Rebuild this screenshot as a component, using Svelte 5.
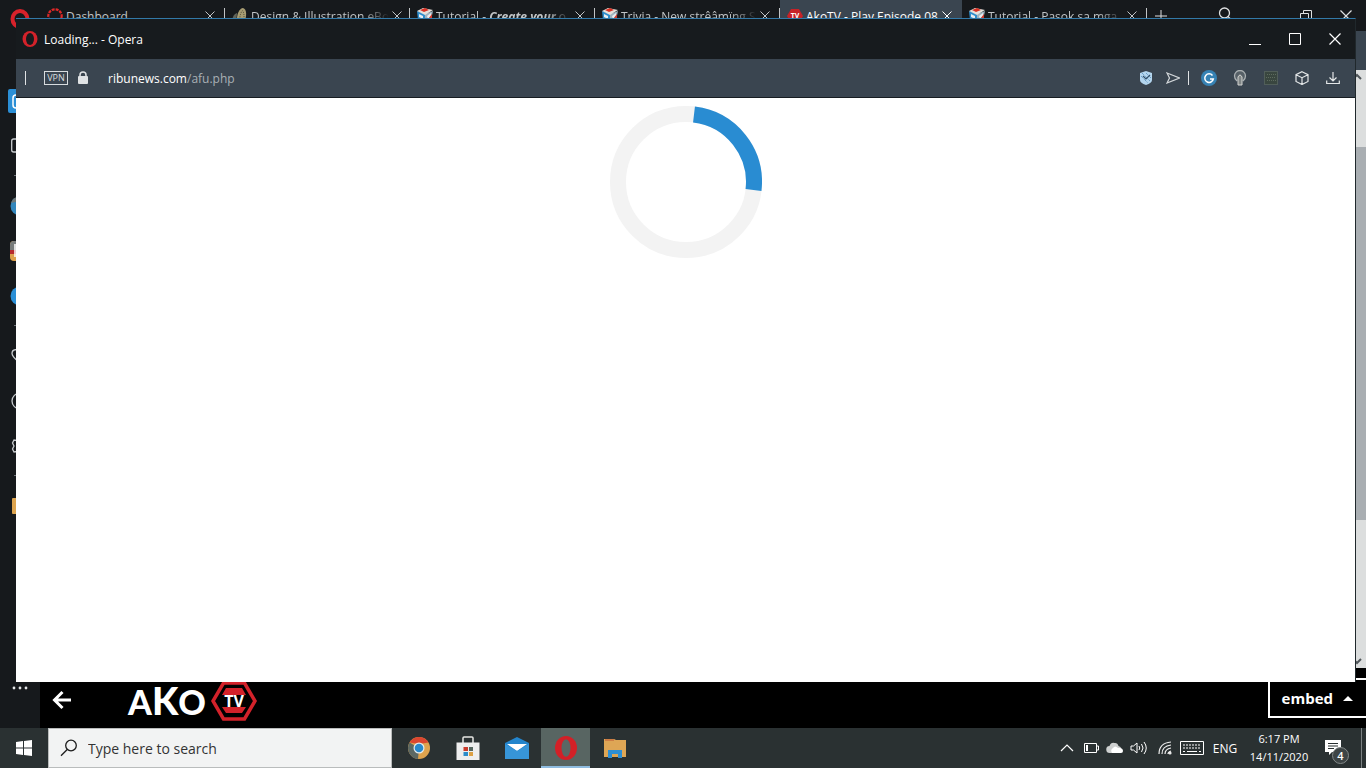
<script lang="ts">
  type Tab = {
    icon: 'gauge' | 'leaf' | 'cube' | 'tv';
    title: string;
    strong?: string;
    rest?: string;
    active?: boolean;
  };

  const tabs: Tab[] = [
    { icon: 'gauge', title: 'Dashboard' },
    { icon: 'leaf', title: 'Design & Illustration eBo' },
    { icon: 'cube', title: 'Tutorial - ', strong: 'Create your', rest: ' o' },
    { icon: 'cube', title: 'Trivia - New strêâmïng S' },
    { icon: 'tv', title: 'AkoTV - Play Episode 08', active: true },
    { icon: 'cube', title: 'Tutorial - Pasok sa mga' }
  ];

  let query = $state('');
</script>

<div class="desktop">
  <div class="browser">
    <aside class="sidebar">
      <button class="side-item tile" aria-label="Speed dial">
        <svg width="24" height="24" viewBox="0 0 24 24"><rect width="24" height="24" rx="2" fill="#2b8fd6" /><rect x="5" y="6" width="13" height="13" rx="3" fill="none" stroke="#fff" stroke-width="1.5" /></svg>
      </button>
      <button class="side-item" aria-label="Workspace">
        <svg width="20" height="20" viewBox="0 0 20 20"><rect x="1.7" y="3" width="16" height="13" rx="2" fill="none" stroke="#c8cccf" stroke-width="1.3" /></svg>
      </button>
      <hr />
      <button class="side-item" aria-label="Messenger">
        <svg width="20" height="20" viewBox="0 0 20 20"><circle cx="10" cy="10" r="9.5" fill="#3387bd" /><path d="M1 7A9.500 9.500 0 0 1 10 .5V5z" fill="#6e7778" /></svg>
      </button>
      <button class="side-item" aria-label="Instagram">
        <svg width="20" height="20" viewBox="0 0 20 20"><rect width="20" height="20" rx="4" fill="#dda04c" /><path d="M0 4q0-4 4-4h16v9H0z" fill="#777b7b" /><path d="M0 9h9v4H0z" fill="#b62a2e" /><path d="M5 3v13" stroke="#fff" stroke-width="1.500" /></svg>
      </button>
      <button class="side-item" aria-label="Telegram">
        <svg width="20" height="20" viewBox="0 0 20 20"><circle cx="10" cy="10" r="9.500" fill="#2b8fd6" /></svg>
      </button>
      <hr />
      <button class="side-item" aria-label="Favourites">
        <svg width="20" height="20" viewBox="0 0 20 20"><path d="M10 17C5 13 2 10.500 2 7.500 2 3 8 2.500 10 6c2-3.500 8-3 8 1.500 0 3-3 5.500-8 9.500z" fill="none" stroke="#c8cccf" stroke-width="1.3" /></svg>
      </button>
      <button class="side-item" aria-label="History">
        <svg width="20" height="20" viewBox="0 0 20 20"><circle cx="10" cy="10" r="8" fill="none" stroke="#c8cccf" stroke-width="1.3" /><path d="M10 5v5l3 2" fill="none" stroke="#c8cccf" /></svg>
      </button>
      <button class="side-item" aria-label="Settings">
        <svg width="20" height="20" viewBox="0 0 20 20"><path d="M8 2h4l1 2.500 3-.5 2 3.500-2 2.500 2 2.500-2 3.500-3-.5-1 2.500H8L6.500 15.500 4 16 2.500 13 4 10 2.500 7 4 4l2.500.5z" fill="none" stroke="#c8cccf" stroke-width="1.3" /></svg>
      </button>
      <hr />
      <button class="side-item" aria-label="Folder">
        <svg width="16" height="16" viewBox="0 0 16 16"><rect width="16" height="16" rx="1" fill="#dda44f" /></svg>
      </button>
      <button class="side-more" aria-label="More">
        <svg width="16" height="4" viewBox="0 0 16 4" fill="#e4e6e7"><circle cx="2" cy="2" r="1.400" /><circle cx="8" cy="2" r="1.400" /><circle cx="14" cy="2" r="1.400" /></svg>
      </button>
    </aside>

    <div class="main">
      <div class="tab-bar">
        {#each tabs as tab}
          <div class="tab" class:active={tab.active}>
            {#if tab.icon === 'gauge'}
              <svg width="16" height="16" viewBox="0 0 16 16"><circle cx="8" cy="8" r="6.700" fill="none" stroke="#e02828" stroke-width="2.200" stroke-dasharray="3 1" /></svg>
            {:else if tab.icon === 'leaf'}
              <svg width="16" height="16" viewBox="0 0 16 16"><path d="M5 16C4 5 8 0 11 0c4 1 4 8 1 16z" fill="#a79c72" /><path d="M1 16Q-1 7 5 5L4 16z" fill="#60645a" /><path d="M8 15Q7 6 11 2M11 15q2-7 0-12" fill="none" stroke="#4c4936" stroke-dasharray="1 1" /></svg>
            {:else if tab.icon === 'cube'}
              <svg width="16" height="16" viewBox="0 0 16 16"><path d="M0 3 8 6v10l-7-4z" fill="#2e8dcc" /><path d="M16 3 8 6v10l6-4z" fill="#9fb4c0" /><path d="m0 3 6-3 10 2-8 5z" fill="#e4e1dc" /><path d="m3 2 5-2 4 2-5 2z" fill="#d93124" /><path d="M2 6l4 2v3L2 9zm8 2 4-3v3l-3 3z" fill="#e8edf0" /><path d="M11 11l4-5v4l-4 4z" fill="#cf3a2d" /></svg>
            {:else}
              <svg width="16" height="16" viewBox="0 0 16 16"><path d="M4 1h8l4 7-4 7H4L0 8z" fill="#c72227" /><text x="8" y="10" text-anchor="middle" font-family="Open Sans, sans-serif" font-size="7" font-weight="700" fill="#fff">TV</text></svg>
            {/if}
            <span class="tab-title">{tab.title}{#if tab.strong}<em>{tab.strong}</em>{tab.rest}{/if}</span>
            <button class="tab-close" aria-label="Close tab">
              <svg width="10" height="10" viewBox="0 0 10 10"><path d="m.5.5 9 9m0-9-9 9" stroke="currentColor" /></svg>
            </button>
          </div>
        {/each}
        <button class="new-tab" aria-label="New tab">
          <svg width="12" height="12" viewBox="0 0 12 12"><path d="M6 0v12M0 6h12" stroke="#dfe1e2" /></svg>
        </button>
        <div class="bar-controls">
          <button aria-label="Search tabs">
            <svg width="14" height="18" viewBox="0 0 14 18" fill="none" stroke="#dfe1e2" stroke-width="1.300"><circle cx="6.500" cy="6" r="5" /><path d="m10 9.500 3.500 3.500" /></svg>
          </button>
          <button class="restore" aria-label="Restore">
            <svg width="12" height="12" viewBox="0 0 12 12" fill="none" stroke="#dfe1e2"><path d="M.5 3.500h8v8h-8zM3.500 3.500v-3h8v8h-3" /></svg>
          </button>
          <button aria-label="Close window">
            <svg width="12" height="12" viewBox="0 0 12 12"><path d="m.5.5 11 11m0-11-11 11" stroke="#dfe1e2" stroke-width="1.200" /></svg>
          </button>
        </div>
      </div>
      <div class="tool-bar"></div>
      <div class="page">
        <div class="scrollbar">
          <svg width="10" height="8" viewBox="0 0 10 8"><path d="m1 6 4-4 4 4" fill="none" stroke="#50565a" stroke-width="2" /></svg>
          <div class="thumb"></div>
          <svg width="10" height="8" viewBox="0 0 10 8"><path d="m1 2 4 4 4-4" fill="none" stroke="#50565a" stroke-width="2" /></svg>
        </div>
      </div>
      <footer class="player">
        <button class="back" aria-label="Back">
          <svg width="20" height="20" viewBox="0 0 20 20" fill="none" stroke="#fff" stroke-width="3"><path d="M19 10H3M10.500 2 2.500 10l8 8" /></svg>
        </button>
        <div class="logo">
          <span class="ako">A<b>K</b>O</span>
          <svg width="46" height="40" viewBox="0 0 46 40">
            <path d="M12.500 2h21L44 20 33.500 38h-21L2 20z" fill="#000" stroke="#d3222a" stroke-width="3.500" />
            <path d="M15 7h16l4 7H11zM11 26h24l-4 6H15z" fill="#d3222a" />
            <text x="23" y="26" text-anchor="middle" font-family="Open Sans, sans-serif" font-size="16" font-weight="700" fill="#fff">TV</text>
          </svg>
        </div>
        <button class="embed">
          embed
          <svg width="10" height="5" viewBox="0 0 10 5"><path d="m0 5 5-5 5 5z" fill="#fff" /></svg>
        </button>
      </footer>
    </div>
    <div class="opera-badge">
      <svg width="20" height="20" viewBox="0 0 20 20"><ellipse cx="10" cy="10" rx="7.500" ry="8" fill="none" stroke="#d8222b" stroke-width="4" /></svg>
    </div>
  </div>

  <section class="popup">
    <header class="title-bar">
      <svg width="16" height="16" viewBox="0 0 16 16"><ellipse cx="8" cy="8" rx="7.500" ry="8" fill="#d3222a" /><ellipse cx="8" cy="8" rx="4" ry="6" fill="#171b1e" /></svg>
      <h1>Loading... - Opera</h1>
      <div class="window-controls">
        <button aria-label="Minimize"><svg width="12" height="12" viewBox="0 0 12 12"><path d="M0 11.500h12" stroke="#fff" /></svg></button>
        <button aria-label="Maximize"><svg width="12" height="12" viewBox="0 0 12 12"><path d="M.5.5h11v11H.5z" fill="none" stroke="#fff" /></svg></button>
        <button aria-label="Close"><svg width="12" height="12" viewBox="0 0 12 12"><path d="m.5.5 11 11m0-11-11 11" stroke="#fff" stroke-width="1.200" /></svg></button>
      </div>
    </header>
    <div class="address-bar">
      <span class="divider"></span>
      <button class="vpn">VPN</button>
      <svg class="lock" width="10" height="14" viewBox="0 0 10 14"><rect y="5" width="10" height="8" rx="1" fill="#dfe2e4" /><path d="M2 6V4a3 3 0 0 1 6 0v2" fill="none" stroke="#dfe2e4" stroke-width="1.500" /></svg>
      <span class="url">ribunews.com<span>/afu.php</span></span>
      <div class="extensions">
        <button class="shield" aria-label="Ad blocker">
          <svg width="12" height="14" viewBox="0 0 12 14"><path d="M0 2 6 0l6 2v7q0 3-6 5-6-2-6-5z" fill="#b3d5ee" /><path d="m2 2 8 8M1 5l7 7M6 2l5 5" stroke="#4b85b5" stroke-dasharray="1 1" /><path d="m3 5 3 3 4-4" fill="none" stroke="#34516b" stroke-width="1.200" /></svg>
        </button>
        <button class="send" aria-label="Send to My Flow">
          <svg width="14" height="12" viewBox="0 0 14 12"><path d="M1 1l12.500 5L1 11l2.500-5z" fill="none" stroke="#d3d7da" stroke-width="1.200" /></svg>
        </button>
        <span class="divider"></span>
        <button class="ext" aria-label="Grammarly">
          <svg width="16" height="16" viewBox="0 0 16 16"><circle cx="8" cy="8" r="8" fill="#3682b4" /><path d="M11.500 5.500A4.300 4.300 0 1 0 12.300 9H9" fill="none" stroke="#fff" stroke-width="1.500" /></svg>
        </button>
        <button class="ext" aria-label="Lightbulb">
          <svg width="14" height="16" viewBox="0 0 14 16"><path d="M4 11Q1.500 9 1.500 6a5.500 5.500 0 0 1 11 0q0 3-2.500 5" fill="#566067" stroke="#aab0b2" stroke-width="1.300" /><path d="M5 15V7q2-4 4 0v8z" fill="#7f8586" stroke="#d4d5d2" /></svg>
        </button>
        <button class="ext" aria-label="Extension">
          <svg width="14" height="14" viewBox="0 0 14 14"><rect x=".5" y=".5" width="13" height="13" fill="#39463f" stroke="#6b786c" stroke-dasharray="1 1" /><path d="M3 3.500h9M2 6.500h9M3 9.500h9" stroke="#5d6b5e" stroke-dasharray="1 1" /></svg>
        </button>
        <button class="ext" aria-label="Extensions">
          <svg width="14" height="14" viewBox="0 0 14 14" fill="none" stroke="#e4e7e8" stroke-width="1.200"><path d="m7 .7 6 3v6.800l-6 3-6-3V3.700zM1 3.700l6 3 6-3M7 6.700v6.800" /></svg>
        </button>
        <button class="ext" aria-label="Downloads">
          <svg width="14" height="14" viewBox="0 0 14 14" fill="none" stroke="#e4e7e8" stroke-width="1.200"><path d="M7 1v8.500M3.500 6.500 7 10l3.500-3.500M.7 9.500v3h12.600v-3" /></svg>
        </button>
      </div>
    </div>
    <div class="popup-page">
      <svg class="spinner" width="152" height="152" viewBox="0 0 152 152" role="img" aria-label="Loading">
        <circle cx="76" cy="76" r="68" fill="none" stroke="#f3f3f3" stroke-width="16" />
        <path d="M84 8.500A68 68 0 0 1 143.500 84" fill="none" stroke="#298cd2" stroke-width="16" />
      </svg>
    </div>
  </section>

  <nav class="taskbar">
    <button class="start" aria-label="Start">
      <svg width="16" height="16" viewBox="0 0 16 16" fill="#fff"><path d="m0 2 7-1v6.500H0zM8 1l8-1v7.500H8zM0 8.500h7V15l-7-1zM8 8.500h8V16l-8-1z" /></svg>
    </button>
    <label class="search">
      <svg width="18" height="18" viewBox="0 0 18 18" fill="none" stroke="#1c1c1c" stroke-width="1.300"><circle cx="11" cy="6.500" r="5.300" /><path d="M7.200 10.500 1 16.800" /></svg>
      <input type="text" placeholder="Type here to search" aria-label="Type here to search" bind:value={query} />
    </label>
    <div class="apps">
      <button class="app" aria-label="Chrome">
        <svg width="24" height="24" viewBox="0 0 24 24"><circle cx="12" cy="12" r="11" fill="#dea34e" /><path d="M12 12 2.500 6.500A11 11 0 0 0 11 23z" fill="#5c6863" /><path d="M2.500 6.500A11 11 0 0 1 21.500 6.500L12 8z" fill="#db4630" /><circle cx="12" cy="12" r="5.500" fill="#e5edf0" /><circle cx="12" cy="12" r="4.300" fill="#2889cd" /></svg>
      </button>
      <button class="app" aria-label="Microsoft Store">
        <svg width="24" height="24" viewBox="0 0 24 24"><path d="M7 7V2q0-1 1-1h8q1 0 1 1v5" fill="none" stroke="#e6e6e4" stroke-width="1.500" /><path d="M.5 6.500h23V24H.5z" fill="#eee" /><path d="M7.500 11H12v4H7.500z" fill="#ca3a2b" /><path d="M13 11h4v4h-4z" fill="#566760" /><path d="M7.500 16H12v4H7.500z" fill="#2c8bc9" /><path d="M13 16h4v4h-4z" fill="#dca044" /></svg>
      </button>
      <button class="app" aria-label="Mail">
        <svg width="24" height="24" viewBox="0 0 24 24"><path d="M0 7 12 1l12 6v16H0z" fill="#2385cd" /><path d="M2 8h20l-10 7z" fill="#fff" /><path d="M0 8l12 7 12-7v15H0z" fill="#3795d8" /></svg>
      </button>
      <button class="app running" aria-label="Opera">
        <svg width="24" height="24" viewBox="0 0 24 24"><ellipse cx="12" cy="12" rx="11" ry="12" fill="#d32027" /><ellipse cx="12" cy="12" rx="4.500" ry="8.800" fill="#5a6764" /></svg>
      </button>
      <button class="app" aria-label="File Explorer">
        <svg width="24" height="24" viewBox="0 0 24 24"><path d="M1 3h10l2 1h10v17H1z" fill="#dea655" /><path d="M2 4h9" stroke="#be5435" /><path d="M5 22v-8h14v8h-4v-4H9v4z" fill="#2e8fd3" /></svg>
      </button>
    </div>
    <div class="tray">
      <button class="tray-icon" aria-label="Show hidden icons"><svg width="14" height="8" viewBox="0 0 14 8"><path d="m1 7 6-6 6 6" fill="none" stroke="#fff" stroke-width="1.200" /></svg></button>
      <button class="tray-icon" aria-label="Battery"><svg width="16" height="10" viewBox="0 0 16 10"><path d="M1.500.5h12v9h-12zM14 3h1.500v4H14" fill="none" stroke="#fff" /><path d="M3 2h2v6H3z" fill="#fff" /></svg></button>
      <button class="tray-icon" aria-label="OneDrive"><svg width="18" height="12" viewBox="0 0 18 12"><path d="M4 11a3.500 3.500 0 0 1-.5-7Q5 0 8.500 1q3-.5 4 3A4 4 0 0 1 14 11z" fill="#ced0d0" /><path d="M6 11q-2-3 1-5 2-3 5 0 5-.5 5 3 0 2-2 2z" fill="#fff" /></svg></button>
      <button class="tray-icon" aria-label="Volume"><svg width="18" height="14" viewBox="0 0 18 14" fill="none" stroke="#fff"><path d="M1 5h2.500L7 2v10L3.500 9H1zM9 5q1.500 2 0 4M11.500 3q3 4 0 8M14 1q4.500 6 0 12" /></svg></button>
      <button class="tray-icon wide" aria-label="Network"><svg width="14" height="14" viewBox="0 0 14 14" fill="none" stroke="#eee" stroke-width="1.200"><path d="M1 13Q1 2 13 1M4 13Q4 5 13 4M7 13q0-5 6-6M10 13q0-2 3-3" /><circle cx="12" cy="12" r="1" fill="#fff" /></svg></button>
      <button class="tray-icon wide" aria-label="Touch keyboard"><svg width="24" height="14" viewBox="0 0 24 14" fill="none" stroke="#fff"><path d="M.5.5h23v13H.5z" /><path d="M3 4h18M3 7h18" stroke-dasharray="2 1" /><path d="M3 10.500h2m2 0h10m2 0h2" /></svg></button>
      <button class="lang">ENG</button>
      <button class="clock"><span>6:17 PM</span><span>14/11/2020</span></button>
      <button class="notifications" aria-label="Notifications, 4 new">
        <svg width="16" height="16" viewBox="0 0 16 16"><path d="M0 0h16v12H7l-3 3v-3H0z" fill="#fff" /><path d="M3 3.500h10M3 6h10M3 8.500h6" stroke="#293031" /></svg>
        <span class="count">4</span>
      </button>
      <button class="show-desktop" aria-label="Show desktop"></button>
    </div>
  </nav>
</div>

<style>
  :global(body) {
    margin: 0;
    overflow: hidden;
  }

  .desktop {
    position: relative;
    display: flex;
    flex-direction: column;
    height: 100vh;
    background: #16191c;
    color: #fff;
    font-family: 'Segoe UI', 'Open Sans', 'Noto Sans', sans-serif;
    font-size: 12px;
  }

  svg {
    display: block;
    flex-shrink: 0;
  }

  button {
    display: flex;
    align-items: center;
    justify-content: center;
    padding: 0;
    border: 0;
    background: none;
    color: inherit;
    font: inherit;
  }

  .browser {
    position: relative;
    display: flex;
    flex: 1;
    min-height: 0;
  }

  .opera-badge {
    position: absolute;
    top: 9px;
    left: 10px;
  }

  .sidebar {
    display: flex;
    flex-direction: column;
    align-items: center;
    width: 40px;
    padding: 78px 0 38px;
    box-sizing: border-box;
  }

  .side-item {
    width: 40px;
    height: 45px;
  }

  .sidebar hr {
    width: 12px;
    height: 1px;
    margin: 7px 0;
    border: 0;
    background: #70767a;
  }

  .side-more {
    margin-top: auto;
  }

  .main {
    display: flex;
    flex: 1;
    flex-direction: column;
    min-width: 0;
  }

  .tab-bar {
    display: flex;
    height: 31px;
  }

  .tab {
    display: flex;
    align-items: center;
    flex: 0 1 185px;
    min-width: 0;
    gap: 3px;
    padding: 0 10px 0 7px;
    box-sizing: border-box;
    background: linear-gradient(#c2c5c7, #c2c5c7) right 8px / 1px 15px no-repeat;
    color: #c2c5c7;
  }

  .tab.active {
    flex-basis: 182px;
    background: #3a4550;
    color: #fff;
  }

  .tab-title {
    flex: 1;
    padding-top: 2px;
    white-space: nowrap;
    mask-image: linear-gradient(to right, #000 80%, transparent);
  }

  .tab:first-child .tab-title,
  .tab.active .tab-title {
    mask-image: none;
  }

  .tab-title em {
    font-weight: 700;
  }

  .new-tab {
    width: 28px;
  }

  .bar-controls {
    display: flex;
    flex: 1;
    justify-content: flex-end;
  }

  .bar-controls button {
    width: 40px;
  }

  .bar-controls .restore {
    margin-left: 41px;
  }

  .tool-bar {
    height: 39px;
    background: #3a4550;
  }

  .page {
    display: flex;
    flex: 1;
    justify-content: flex-end;
    background: #fff;
  }

  .scrollbar {
    display: flex;
    flex-direction: column;
    justify-content: space-between;
    width: 14px;
    padding: 3px 0;
    background: #dcdede;
  }

  .thumb {
    height: 63%;
    margin: 66px 0 auto;
    background: #a9aeb2;
  }

  .player {
    display: flex;
    align-items: center;
    height: 60px;
    background: #000;
  }

  .back {
    width: 44px;
    padding-top: 4px;
  }

  .logo {
    display: flex;
    align-items: center;
    margin-left: 44px;
    padding-top: 6px;
  }

  .ako {
    width: 83px;
    font-family: Lato, 'Open Sans', sans-serif;
    font-size: 34px;
    font-weight: 900;
    line-height: 40px;
  }

  .ako b {
    font-size: 38px;
    font-weight: 900;
  }

  .embed {
    gap: 10px;
    height: 40px;
    margin-left: auto;
    padding: 0 13px 0 12px;
    border: 2px solid #fff;
    border-right: 0;
    font-size: 15px;
    font-weight: 700;
  }

  .popup {
    position: absolute;
    top: 18px;
    right: 10px;
    bottom: 86px;
    left: 16px;
    display: flex;
    flex-direction: column;
    border-top: 1px solid #3279a8;
    border-right: 1px solid #20282c;
    background: #171b1e;
  }

  .title-bar {
    display: flex;
    align-items: center;
    gap: 6px;
    height: 40px;
    padding-left: 6px;
  }

  h1 {
    margin: 0;
    font-size: 12px;
    font-weight: 400;
  }

  .window-controls {
    display: flex;
    margin-left: auto;
  }

  .window-controls button {
    width: 40px;
    height: 40px;
  }

  .address-bar {
    display: flex;
    align-items: center;
    height: 38px;
    padding-left: 9px;
    border-bottom: 1px solid #171d22;
    background: #3a4550;
  }

  .divider {
    width: 1px;
    height: 14px;
    background: #e0e3e5;
  }

  .vpn {
    width: 24px;
    height: 14px;
    margin-left: 18px;
    border: 1px solid #d8dcdf;
    color: #d8dcdf;
    font-size: 9px;
    line-height: 12px;
  }

  .lock {
    margin: 0 20px 0 10px;
  }

  .url span {
    color: #a9b0b5;
  }

  .extensions {
    display: flex;
    align-items: center;
    margin-left: auto;
    padding-right: 7px;
  }

  .shield,
  .send {
    width: 27px;
  }

  .extensions .divider {
    margin: 0 4px 0 2px;
  }

  .ext {
    width: 31px;
  }

  .popup-page {
    display: flex;
    flex: 1;
    align-items: flex-start;
    justify-content: center;
    padding-top: 8px;
    background: #fff;
  }

  .taskbar {
    display: flex;
    height: 40px;
    background: #2a3132;
  }

  .start {
    width: 48px;
  }

  .search {
    display: flex;
    align-items: center;
    gap: 10px;
    width: 344px;
    padding-left: 11px;
    box-sizing: border-box;
    border: 1px solid #b9bcbc;
    background: #f2f3f3;
  }

  .search input {
    flex: 1;
    min-width: 0;
    padding: 0;
    border: 0;
    outline: 0;
    background: none;
    color: #222;
    font: inherit;
    font-size: 14px;
  }

  .search input::placeholder {
    color: #333;
    opacity: 1;
  }

  .apps {
    display: flex;
    margin-left: 2px;
  }

  .app {
    width: 49px;
  }

  .app.running {
    box-sizing: border-box;
    border-top: 2px solid #586562;
    border-bottom: 2px solid #8fbce0;
    background: #586562;
  }

  .tray {
    display: flex;
    margin-left: auto;
  }

  .tray-icon {
    width: 24px;
  }

  .tray-icon.wide {
    width: 27px;
  }

  .lang {
    width: 40px;
  }

  .clock {
    flex-direction: column;
    width: 68px;
    font-size: 11px;
    line-height: 18px;
  }

  .notifications {
    position: relative;
    width: 48px;
    padding-right: 8px;
  }

  .count {
    position: absolute;
    right: 12px;
    bottom: 4px;
    width: 15px;
    border: 1px solid #838989;
    border-radius: 50%;
    background: #3d4445;
    font-size: 11px;
    font-weight: 600;
    line-height: 15px;
  }

  .show-desktop {
    width: 5px;
    border-left: 1px solid #7b8182;
  }
</style>
